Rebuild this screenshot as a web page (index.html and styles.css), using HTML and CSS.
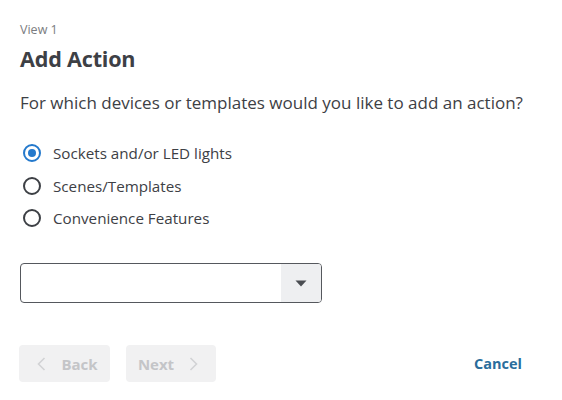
FILE: index.html
```html
<!DOCTYPE html>
<html>
<head>
<meta charset="utf-8">
<link rel="stylesheet" href="styles.css">
</head>
<body>
<div class="page">
  <div class="view-label">View 1</div>
  <h1 class="title">Add Action</h1>
  <p class="question">For which devices or templates would you like to add an action?</p>
  <div class="options">
    <label class="option"><span class="radio checked"></span><span>Sockets and/or LED lights</span></label>
    <label class="option"><span class="radio"></span><span>Scenes/Templates</span></label>
    <label class="option"><span class="radio"></span><span>Convenience Features</span></label>
  </div>
  <div class="select">
    <div class="select-value"></div>
    <div class="select-arrow"><svg width="12" height="7" viewBox="0 0 12 7"><path d="M0.5 0.5 L11.5 0.5 L6 6.5 Z" fill="#4a4d52"/></svg></div>
  </div>
  <div class="actions">
    <button class="btn btn-back">
      <svg width="9" height="14" viewBox="0 0 9 14"><path d="M7.5 1 L1.5 7 L7.5 13" fill="none" stroke="#d2d3d5" stroke-width="1.6"/></svg>
      <span>Back</span>
    </button>
    <button class="btn btn-next">
      <span>Next</span>
      <svg width="9" height="14" viewBox="0 0 9 14"><path d="M1.5 1 L7.5 7 L1.5 13" fill="none" stroke="#d2d3d5" stroke-width="1.6"/></svg>
    </button>
    <div class="spacer"></div>
    <a class="cancel">Cancel</a>
  </div>
</div>
</body>
</html>
```
FILE: styles.css
```css
html, body {
  margin: 0;
  padding: 0;
  background: #ffffff;
}
body {
  font-family: "Open Sans", "Noto Sans", sans-serif;
  color: #3d4045;
}
.page {
  padding: 21px 40px 0 19px;
  display: flex;
  flex-direction: column;
}
.view-label {
  font-size: 12.5px;
  color: #7a7c80;
  line-height: 17px;
  margin-left: 1px;
}
.title {
  margin: 6px 0 0 1px;
  font-size: 21.6px;
  font-weight: 700;
  line-height: 30px;
  color: #3d4045;
  letter-spacing: -0.2px;
}
.question {
  margin: 17px 0 0 1px;
  font-size: 17px;
  line-height: 24px;
  color: #3d4045;
  white-space: nowrap;
}
.options {
  margin-top: 27px;
  display: flex;
  flex-direction: column;
  gap: 10.5px;
}
.option {
  display: flex;
  align-items: center;
  gap: 12px;
  font-size: 15.2px;
  line-height: 22px;
  color: #3d4045;
}
.radio {
  width: 14px;
  height: 14px;
  border: 2px solid #3d4045;
  border-radius: 50%;
  box-sizing: content-box;
  flex: none;
  margin-left: 4px;
  position: relative;
}
.radio.checked {
  border-color: #2479cc;
}
.radio.checked::after {
  content: "";
  position: absolute;
  left: 3px;
  top: 3px;
  width: 8px;
  height: 8px;
  border-radius: 50%;
  background: #2479cc;
}
.select {
  margin: 34px 0 0 1px;
  width: 300px;
  height: 38px;
  border: 1px solid #55585d;
  border-radius: 4px;
  display: flex;
  overflow: hidden;
}
.select-value {
  flex: 1;
}
.select-arrow {
  width: 40px;
  background: #eeeff1;
  display: flex;
  align-items: center;
  justify-content: center;
  padding-top: 1px;
}
.actions {
  margin-top: 42px;
  display: flex;
  align-items: center;
  gap: 16px;
}
.btn {
  height: 37px;
  width: 91px;
  border: none;
  border-radius: 4px;
  background: #f1f1f2;
  color: #c4c5c8;
  font-family: inherit;
  font-size: 15px;
  font-weight: 700;
  display: flex;
  align-items: center;
  justify-content: center;
  gap: 15px;
  padding: 0;
}
.btn-back {
  padding-left: 6px;
}
.btn-next {
  width: 90px;
  padding-right: 6px;
}
.spacer {
  flex: 1;
}
.cancel {
  font-size: 14.5px;
  font-weight: 700;
  color: #2a6d9c;
}
```
